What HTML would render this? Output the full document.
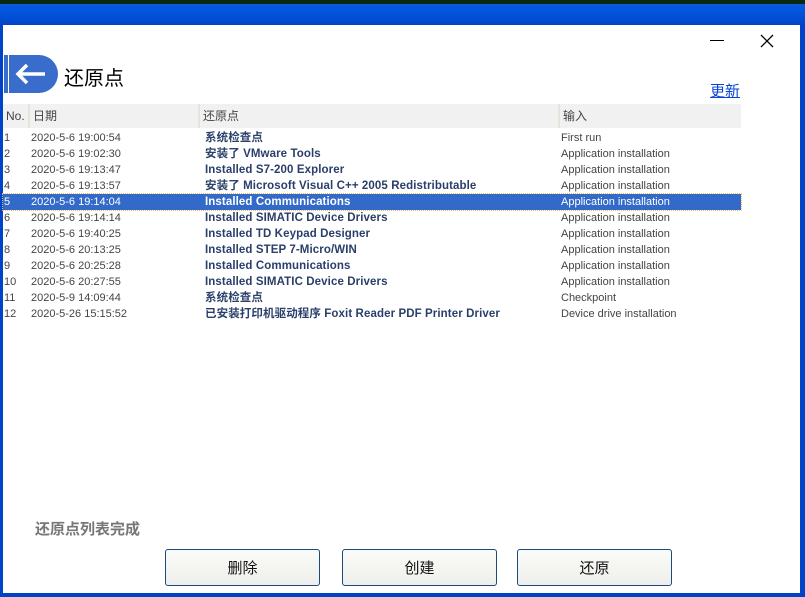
<!DOCTYPE html>
<html><head><meta charset="utf-8"><style>
body{margin:0;width:805px;height:597px;overflow:hidden;background:#0a2a10;font-family:"Liberation Sans","Noto Sans CJK SC",sans-serif;position:relative}
.top{position:absolute;left:0;top:4px;width:805px;height:21px;background:linear-gradient(#0a5ae0,#0050d8 60%,#0044c8)}
.frame{position:absolute;left:0;top:24px;width:805px;height:573px;background:#0042c8}
.win{position:absolute;left:3px;top:25px;width:797px;height:568px;background:#fff}
.abs{position:absolute}
.hdr{position:absolute;top:104px;height:24px;background:#f1f1f1;font-size:12px;color:#444;line-height:24px}
.hdr span{position:absolute;top:0;height:24px;border-right:2px solid #e4e4dc;padding-left:3px;box-sizing:border-box}
.row{position:absolute;left:3px;width:738px;height:16px;font-size:11px;line-height:16px;color:#444}
.row span{position:absolute;top:0;white-space:nowrap}
.row .n{left:1px}.row .d{left:28px}.row .t{left:202px;font-weight:bold;color:#2a3f6a;font-size:11.5px;letter-spacing:0.1px}.row .i{left:558px}
.sel{background:#3369c8;color:#fff;outline:1px dotted #e8c060}
.sel .t{color:#fff}
.btn{position:absolute;top:549px;width:155px;height:37px;border:1px solid #1d4a7a;border-radius:3px;background:linear-gradient(#fbfbf9,#eeeeea);box-sizing:border-box;text-align:center;line-height:38px;font-size:15px;color:#111}
</style></head><body>
<div class="top"></div>
<div class="frame"></div>
<div class="win"></div>
<div class="abs" style="left:710px;top:40px;width:14px;height:1px;background:#000"></div>
<svg class="abs" style="left:760px;top:34px" width="14" height="14"><path d="M1 1L13 13M13 1L1 13" stroke="#000" stroke-width="1.3"/></svg>
<div class="abs" style="left:4px;top:55px;width:54px;height:38px;background:#3a6ccb;border-radius:0 19px 19px 0"></div>
<div class="abs" style="left:8px;top:55px;width:1px;height:38px;background:#fff"></div>
<svg class="abs" style="left:12px;top:60px" width="36" height="28"><path d="M33 14H6M15 5L6 14L15 23" stroke="#fff" stroke-width="3.5" fill="none"/></svg>
<div class="abs" style="left:64px;top:62px;font-size:20px;color:#000">还原点</div>
<div class="abs" style="left:710px;top:80px;font-size:15px;color:#0645d8;text-decoration:underline">更新</div>
<div class="hdr" style="left:3px;width:738px">
<span style="left:0;width:27px">No.</span><span style="left:27px;width:170px">日期</span><span style="left:197px;width:360px">还原点</span><span style="left:557px;width:181px;border-right:none">输入</span></div>
<div class="row" style="top:130px"><span class="n">1</span><span class="d">2020-5-6 19:00:54</span><span class="t">系统检查点</span><span class="i">First run</span></div>
<div class="row" style="top:146px"><span class="n">2</span><span class="d">2020-5-6 19:02:30</span><span class="t">安装了 VMware Tools</span><span class="i">Application installation</span></div>
<div class="row" style="top:162px"><span class="n">3</span><span class="d">2020-5-6 19:13:47</span><span class="t">Installed S7-200 Explorer</span><span class="i">Application installation</span></div>
<div class="row" style="top:178px"><span class="n">4</span><span class="d">2020-5-6 19:13:57</span><span class="t">安装了 Microsoft Visual C++ 2005 Redistributable</span><span class="i">Application installation</span></div>
<div class="row sel" style="top:194px"><span class="n">5</span><span class="d">2020-5-6 19:14:04</span><span class="t">Installed Communications</span><span class="i">Application installation</span></div>
<div class="row" style="top:210px"><span class="n">6</span><span class="d">2020-5-6 19:14:14</span><span class="t">Installed SIMATIC Device Drivers</span><span class="i">Application installation</span></div>
<div class="row" style="top:226px"><span class="n">7</span><span class="d">2020-5-6 19:40:25</span><span class="t">Installed TD Keypad Designer</span><span class="i">Application installation</span></div>
<div class="row" style="top:242px"><span class="n">8</span><span class="d">2020-5-6 20:13:25</span><span class="t">Installed STEP 7-Micro/WIN</span><span class="i">Application installation</span></div>
<div class="row" style="top:258px"><span class="n">9</span><span class="d">2020-5-6 20:25:28</span><span class="t">Installed Communications</span><span class="i">Application installation</span></div>
<div class="row" style="top:274px"><span class="n">10</span><span class="d">2020-5-6 20:27:55</span><span class="t">Installed SIMATIC Device Drivers</span><span class="i">Application installation</span></div>
<div class="row" style="top:290px"><span class="n">11</span><span class="d">2020-5-9 14:09:44</span><span class="t">系统检查点</span><span class="i">Checkpoint</span></div>
<div class="row" style="top:306px"><span class="n">12</span><span class="d">2020-5-26 15:15:52</span><span class="t">已安装打印机驱动程序 Foxit Reader PDF Printer Driver</span><span class="i">Device drive installation</span></div>
<div class="abs" style="left:35px;top:518px;font-size:15px;color:#777;font-weight:bold">还原点列表完成</div>
<div class="btn" style="left:165px">删除</div>
<div class="btn" style="left:342px">创建</div>
<div class="btn" style="left:517px">还原</div>
</body></html>
